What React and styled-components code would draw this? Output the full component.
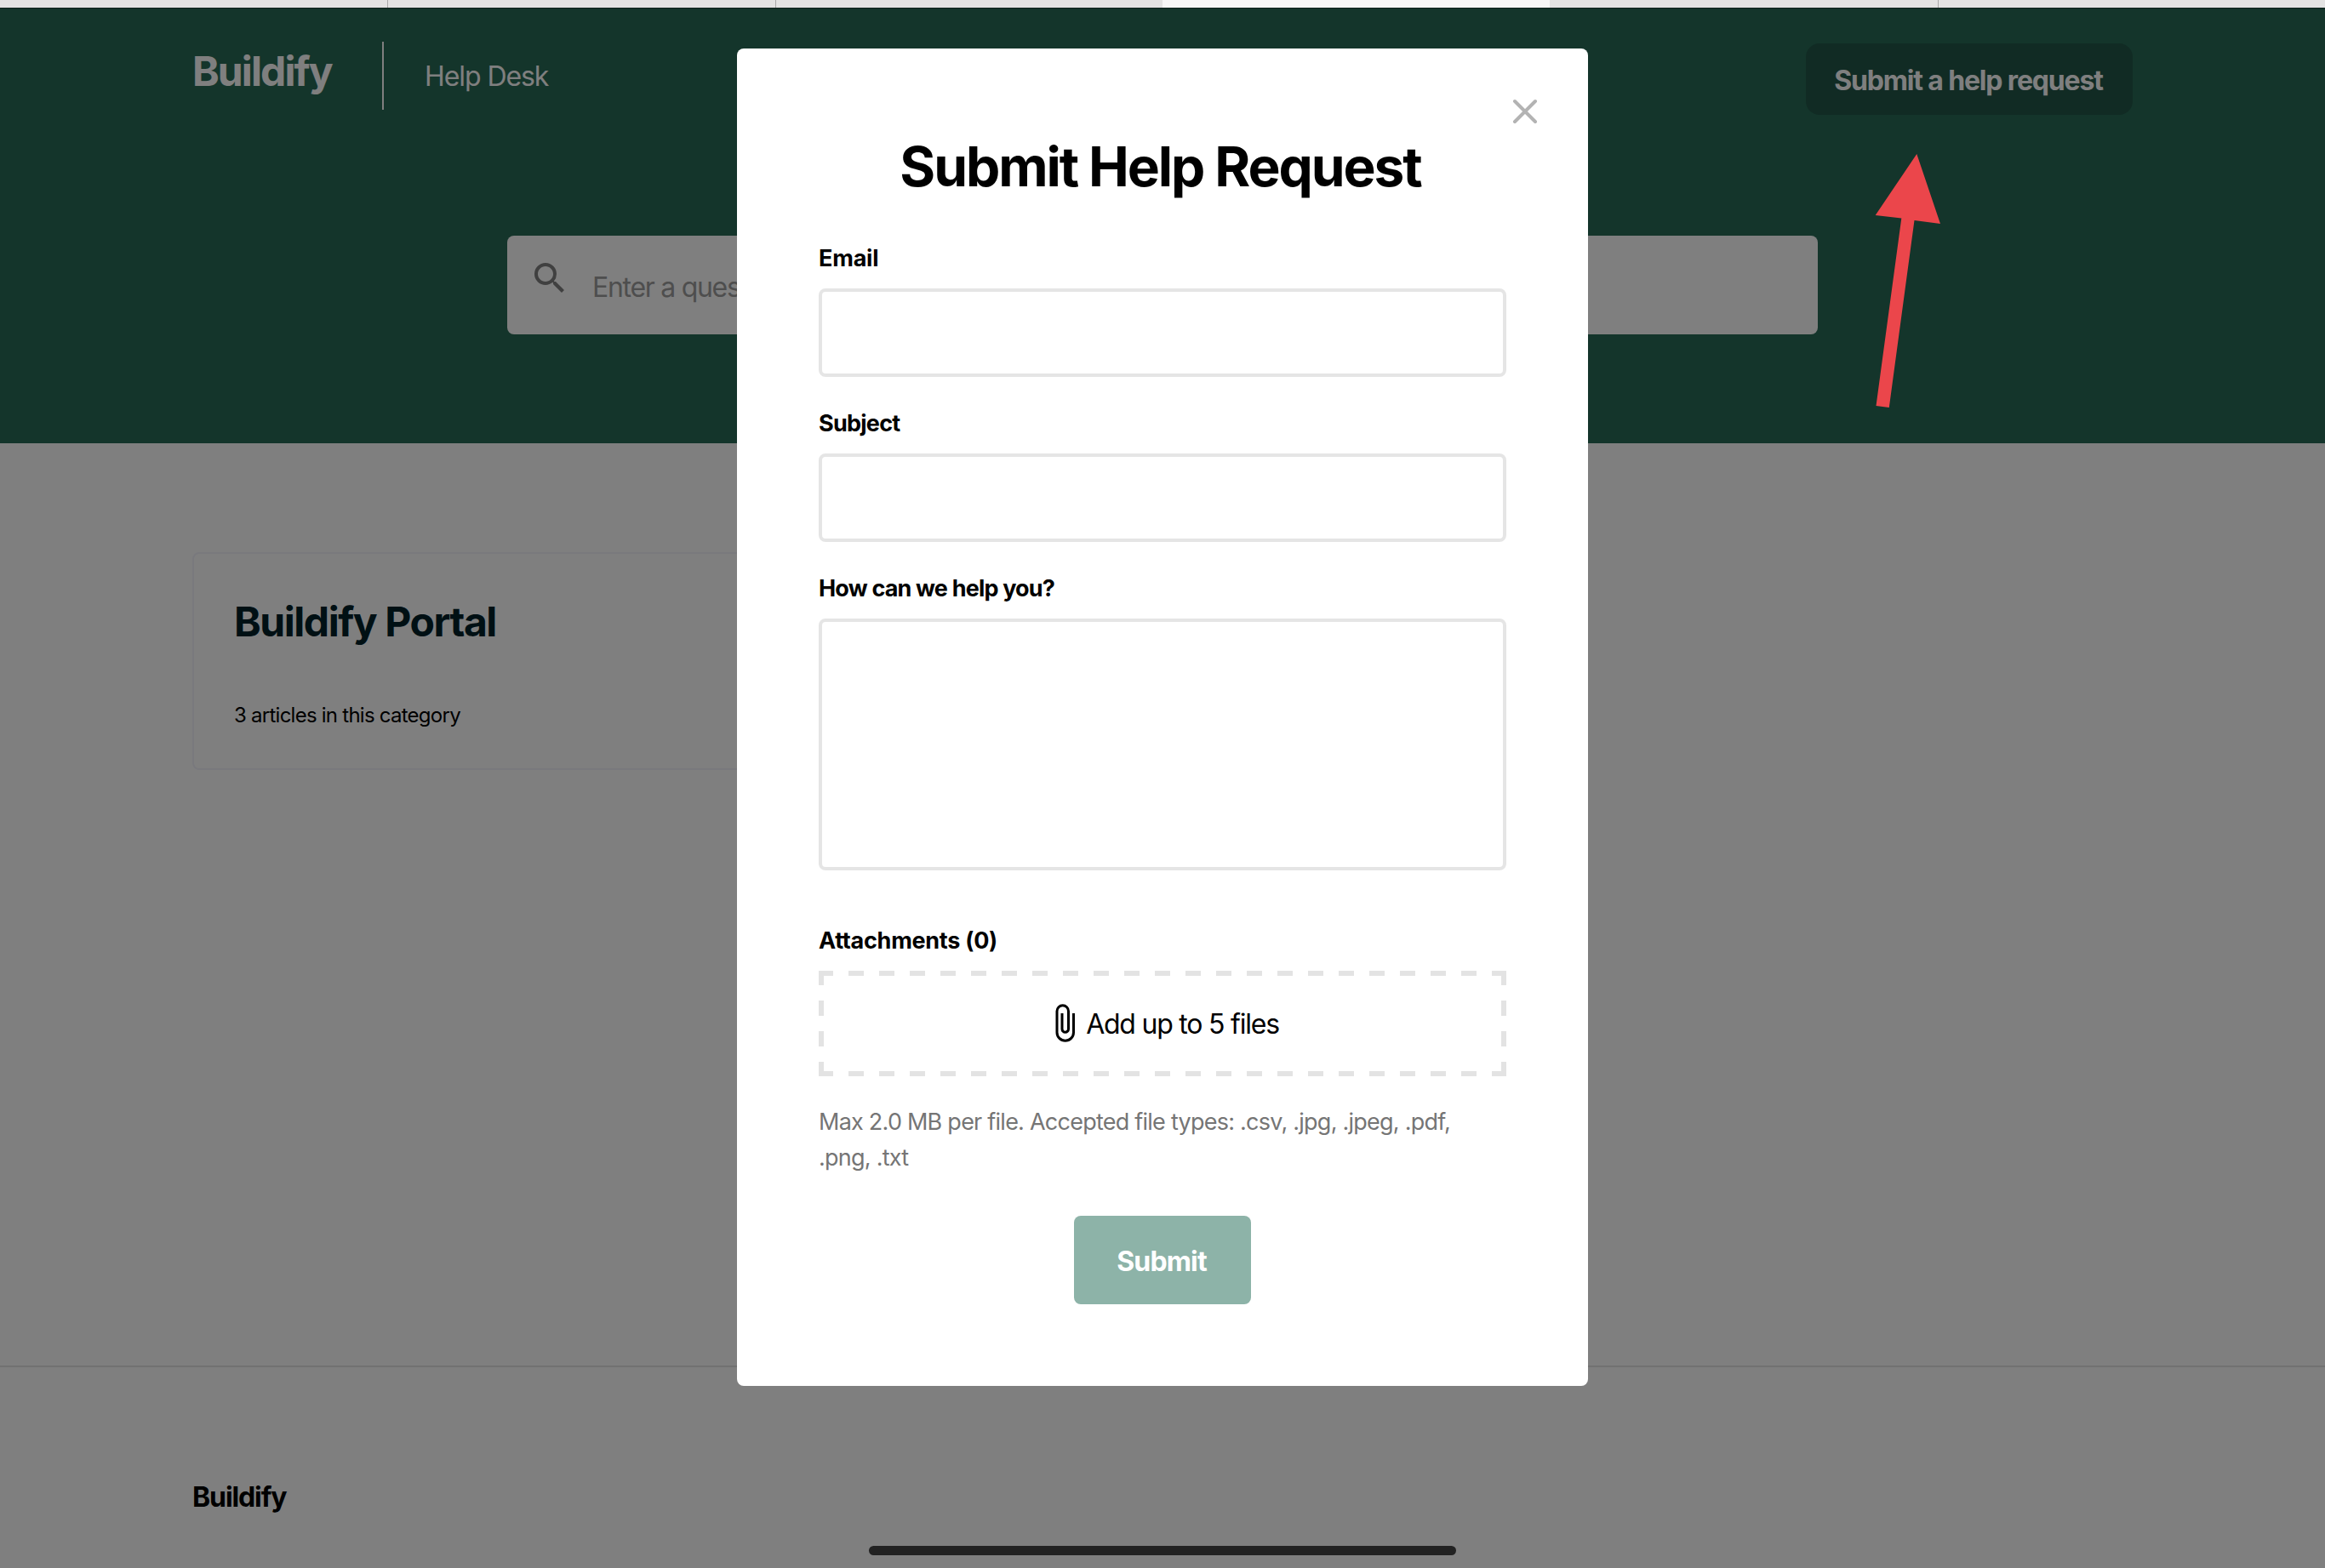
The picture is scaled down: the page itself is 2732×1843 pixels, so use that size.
import React, { useState } from "react";
import styled, { createGlobalStyle } from "styled-components";
import { MdSearch } from "react-icons/md";

const GlobalStyle = createGlobalStyle`
  * {
    box-sizing: border-box;
    margin: 0;
    padding: 0;
  }

  body {
    font-family: "Inter", "Liberation Sans", sans-serif;
    background-color: white;
    color: black;
    overflow: hidden;
  }

  input,
  textarea,
  button {
    font-family: inherit;
    outline: none;
  }
`;

const Screen = styled.div`
  display: flex;
  flex-direction: column;
  width: 2732px;
  height: 1843px;
  position: relative;
  overflow: hidden;
`;

const TabStrip = styled.div`
  display: grid;
  grid-template-columns: repeat(6, 1fr);
  height: 9px;
  flex-shrink: 0;
`;

const Tab = styled.div`
  background-color: ${({ $active }) => ($active ? "#f7f7f7" : "#e3e3e3")};
  border-left: ${({ $divider }) => ($divider ? "1px solid #a9a9a9" : "none")};
`;

const Page = styled.div`
  display: flex;
  flex-direction: column;
  flex: 1;
  position: relative;
`;

const Hero = styled.section`
  height: 512px;
  background-color: #286a56;
  border-top: 1px solid #184034;
`;

const Header = styled.header`
  display: flex;
  justify-content: space-between;
  align-items: flex-start;
  height: 267px;
  padding: 39px 226px 0;
`;

const Brand = styled.div`
  display: flex;
  align-items: flex-start;
`;

const Logo = styled.h1`
  font-size: 48px;
  line-height: 70px;
  font-weight: 700;
  letter-spacing: -1.9px;
  width: 223px;
  color: white;
`;

const BrandName = styled.span`
  height: 80px;
  border-left: 2px solid white;
  padding-left: 48px;
  font-size: 32px;
  line-height: 82px;
  letter-spacing: -1.08px;
  color: white;
`;

const HelpButton = styled.button`
  width: 384px;
  height: 84px;
  margin-top: 2px;
  padding: 2px 2px 0 0;
  border: none;
  border-radius: 16px;
  background-color: #225648;
  color: white;
  font-size: 32px;
  font-weight: 650;
  letter-spacing: -1.15px;
  white-space: nowrap;
`;

const SearchBar = styled.div`
  display: flex;
  align-items: flex-start;
  width: 1540px;
  height: 116px;
  margin: 0 auto;
  padding: 26px 26px 0;
  border-radius: 8px;
  background-color: white;
`;

const SearchIcon = styled(MdSearch)`
  font-size: 48px;
  color: #808080;
  flex-shrink: 0;
`;

const SearchInput = styled.input`
  flex: 1;
  height: 68px;
  margin-left: 26px;
  border: none;
  background: transparent;
  font-size: 32px;
  letter-spacing: -1.29px;

  &::placeholder {
    color: #9c9c9c;
    opacity: 1;
  }
`;

const Categories = styled.main`
  display: grid;
  grid-template-columns: 1fr 1fr;
  align-items: flex-start;
  gap: 48px;
  height: 1084px;
  padding: 128px 226px;
`;

const CategoryCard = styled.article`
  height: 256px;
  padding: 51px 47px;
  border: 2px solid #f2f2fb;
  border-radius: 8px;
`;

const CategoryTitle = styled.h2`
  font-size: 48px;
  line-height: 58px;
  font-weight: 650;
  letter-spacing: -1.45px;
  color: #002028;
`;

const ArticleCount = styled.p`
  margin-top: 62px;
  font-size: 24px;
  line-height: 38px;
  letter-spacing: -0.75px;
`;

const Footer = styled.footer`
  flex: 1;
  padding: 133px 226px 0;
  border-top: 2px solid #e2e2e2;
`;

const FooterName = styled.p`
  font-size: 32px;
  line-height: 40px;
  font-weight: 650;
  letter-spacing: -1.1px;
`;

const Overlay = styled.div`
  position: absolute;
  inset: 0;
  display: flex;
  justify-content: center;
  align-items: flex-start;
  padding-top: 48px;
  background-color: rgba(0, 0, 0, 0.5);
`;

const Modal = styled.form`
  position: relative;
  display: flex;
  flex-direction: column;
  width: 1000px;
  height: 1572px;
  padding: 99px 96px 96px;
  border-radius: 8px;
  background-color: white;
`;

const CloseButton = styled.button`
  position: absolute;
  top: 58px;
  right: 58px;
  width: 32px;
  height: 32px;
  border: none;
  background: transparent;
  cursor: pointer;

  svg {
    display: block;
  }
`;

const ModalTitle = styled.h2`
  margin-bottom: 50px;
  padding-right: 5px;
  font-size: 64px;
  line-height: 80px;
  font-weight: 650;
  letter-spacing: -2.1px;
  text-align: center;
`;

const Field = styled.div`
  display: flex;
  flex-direction: column;
  gap: 18px;
  margin-bottom: ${({ $space }) => $space || "37px"};
`;

const Label = styled.label`
  font-size: 27px;
  line-height: 35px;
  font-weight: 650;
  letter-spacing: ${({ $spacing }) => $spacing || "-0.75px"};
`;

const Input = styled.input`
  width: 100%;
  height: 104px;
  padding: 0 24px;
  border: 4px solid #e5e5e5;
  border-radius: 8px;
  font-size: 32px;
`;

const TextArea = styled.textarea`
  display: block;
  width: 100%;
  height: 296px;
  padding: 24px;
  border: 4px solid #e5e5e5;
  border-radius: 8px;
  font-size: 32px;
  resize: none;
`;

const dash = "#e3e3e3 0 17px, transparent 17px 35px, #e3e3e3 35px 36px";

/* 18px dashes, a native dashed border draws them too short */
const DropZone = styled.div`
  display: flex;
  justify-content: center;
  align-items: center;
  height: 124px;
  background-image: repeating-linear-gradient(90deg, ${dash}),
    repeating-linear-gradient(90deg, ${dash}),
    repeating-linear-gradient(180deg, ${dash}),
    repeating-linear-gradient(180deg, ${dash});
  background-size: 100% 6px, 100% 6px, 6px 100%, 6px 100%;
  background-position: top, bottom, left, right;
  background-repeat: no-repeat;
  font-size: 32px;
  line-height: 48px;
  letter-spacing: -1.22px;
`;

const DropZoneText = styled.span`
  padding-top: 2px;
`;

const Hint = styled.p`
  font-size: 27px;
  line-height: 42px;
  letter-spacing: -0.76px;
  color: #757575;
`;

const SubmitButton = styled.button`
  align-self: center;
  width: 208px;
  height: 104px;
  margin-top: 47px;
  padding: 2px 2px 0 0;
  border: none;
  border-radius: 8px;
  background-color: #8db3a8;
  color: white;
  font-size: 32px;
  font-weight: 650;
  letter-spacing: -0.85px;
`;

const Arrow = styled.svg`
  position: absolute;
  left: 2200px;
  top: 178px;
`;

const HomeIndicator = styled.div`
  position: absolute;
  left: 1021px;
  bottom: 15px;
  width: 690px;
  height: 11px;
  border-radius: 6px;
  background-color: #222222;
`;

const PaperClip = () => (
  <svg width="47" height="48" viewBox="0 0 47 48" fill="none">
    <path
      d="M32.5 12V34.5A9.75 9.75 0 0 1 13 34.5V9.5A6.75 6.75 0 0 1 26.5 9.5V30.5A3.75 3.75 0 0 1 19 30.5V12"
      stroke="black"
      strokeWidth="3"
    />
  </svg>
);

const App = () => {
  const [email, setEmail] = useState("");
  const [subject, setSubject] = useState("");
  const [message, setMessage] = useState("");

  return (
    <Screen>
      <GlobalStyle />
      <TabStrip>
        <Tab />
        <Tab $divider />
        <Tab $divider />
        <Tab $active />
        <Tab />
        <Tab $divider />
      </TabStrip>
      <Page>
        <Hero>
          <Header>
            <Brand>
              <Logo>Buildify</Logo>
              <BrandName>Help Desk</BrandName>
            </Brand>
            <HelpButton>Submit a help request</HelpButton>
          </Header>
          <SearchBar>
            <SearchIcon />
            <SearchInput placeholder="Enter a question" />
          </SearchBar>
        </Hero>
        <Categories>
          <CategoryCard>
            <CategoryTitle>Buildify Portal</CategoryTitle>
            <ArticleCount>3 articles in this category</ArticleCount>
          </CategoryCard>
        </Categories>
        <Footer>
          <FooterName>Buildify</FooterName>
        </Footer>
        <Overlay>
          <Modal onSubmit={(e) => e.preventDefault()}>
            <CloseButton type="button">
              <svg width="32" height="32" viewBox="0 0 32 32">
                <path
                  d="M4 4L28 28M28 4L4 28"
                  stroke="#b3b3b3"
                  strokeWidth="4"
                  strokeLinecap="round"
                />
              </svg>
            </CloseButton>
            <ModalTitle>Submit Help Request</ModalTitle>
            <Field>
              <Label $spacing="-0.2px">Email</Label>
              <Input value={email} onChange={(e) => setEmail(e.target.value)} />
            </Field>
            <Field>
              <Label>Subject</Label>
              <Input
                value={subject}
                onChange={(e) => setSubject(e.target.value)}
              />
            </Field>
            <Field $space="65px">
              <Label $spacing="-0.83px">How can we help you?</Label>
              <TextArea
                value={message}
                onChange={(e) => setMessage(e.target.value)}
              />
            </Field>
            <Field $space="33px">
              <Label $spacing="-0.27px">Attachments (0)</Label>
              <DropZone>
                <PaperClip />
                <DropZoneText>Add up to 5 files</DropZoneText>
              </DropZone>
            </Field>
            <Hint>
              Max 2.0 MB per file. Accepted file types: .csv, .jpg, .jpeg, .pdf,
              .png, .txt
            </Hint>
            <SubmitButton>Submit</SubmitButton>
          </Modal>
        </Overlay>
      </Page>
      <Arrow width="84" height="304" viewBox="0 0 84 304">
        <path
          d="M52.3 3L80 85L49.5 81L19.8 301L4.5 299L34.3 78.5L3.7 75Z"
          fill="#eb464b"
        />
      </Arrow>
      <HomeIndicator />
    </Screen>
  );
};

export default App;
